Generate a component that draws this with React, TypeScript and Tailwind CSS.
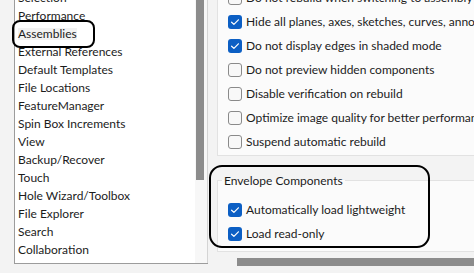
import React from "react";

const listItems = [
  "Selection",
  "Performance",
  "Assemblies",
  "External References",
  "Default Templates",
  "File Locations",
  "FeatureManager",
  "Spin Box Increments",
  "View",
  "Backup/Recover",
  "Touch",
  "Hole Wizard/Toolbox",
  "File Explorer",
  "Search",
  "Collaboration",
  "Messages/Errors/Warnings",
];

const topOptions: { label: string; checked: boolean }[] = [
  { label: "Do not rebuild when switching to assembly window", checked: false },
  { label: "Hide all planes, axes, sketches, curves, annotations, etc.", checked: true },
  { label: "Do not display edges in shaded mode", checked: true },
  { label: "Do not preview hidden components", checked: false },
  { label: "Disable verification on rebuild", checked: false },
  { label: "Optimize image quality for better performance", checked: false },
  { label: "Suspend automatic rebuild", checked: false },
];

function Box({ checked }: { checked: boolean }) {
  if (checked) {
    return (
      <svg width="14" height="14" viewBox="0 0 14 14" className="shrink-0">
        <rect x="0" y="0" width="14" height="14" rx="3" fill="#0c5fc4" />
        <path d="M3.6 7.2 L5.9 9.4 L10.4 4.8" fill="none" stroke="#ffffff" strokeWidth="1.2" strokeLinecap="round" strokeLinejoin="round" />
      </svg>
    );
  }
  return (
    <svg width="14" height="14" viewBox="0 0 14 14" className="shrink-0">
      <rect x="0.5" y="0.5" width="13" height="13" rx="2.5" fill="#f8f8f8" stroke="#8a8a8a" strokeWidth="1" />
    </svg>
  );
}

function Row({ label, checked }: { label: string; checked: boolean }) {
  return (
    <div className="h-[24px] flex items-center gap-[4px] whitespace-nowrap">
      <Box checked={checked} />
      <span>{label}</span>
    </div>
  );
}

export default function App() {
  return (
    <div
      className="w-[474px] h-[273px] overflow-hidden relative bg-[#f3f3f3] flex text-[12px] text-[#1c1c1c] leading-none"
      style={{ fontFamily: 'Lato, "Noto Sans", sans-serif' }}
    >
      <div className="w-[14px] shrink-0" />
      {/* list panel */}
      <div className="w-[194px] h-[264px] shrink-0 flex border-l border-b border-[#9c9c9c] bg-white overflow-hidden">
        <div className="flex-1 -mt-[11px] flex flex-col">
          {listItems.map((t) => (
            <div key={t} className="h-[18px] shrink-0 flex items-center pl-[3px] whitespace-nowrap">
              <span className={t === "Assemblies" ? "bg-[#f2f2f2]" : ""}>{t}</span>
            </div>
          ))}
        </div>
        <div className="w-[13px] shrink-0 flex border-r border-[#d4d4d4] bg-[#f7f7f7]">
          <div className="w-[8px] h-[180px] ml-[1px] bg-[#8c8c8c]" />
        </div>
      </div>
      {/* right panel */}
      <div className="flex-1 flex flex-col pl-[9px] min-w-0">
        <div className="-mt-[14px] h-[170px] shrink-0 flex flex-col border-l border-b border-[#e2e2e2] bg-[#fbfbfb] pl-[10px]">
          {topOptions.map((o) => (
            <Row key={o.label} label={o.label} checked={o.checked} />
          ))}
        </div>
        <fieldset className="mt-[16px] border border-r-0 border-[#e2e2e2] bg-[#fbfbfb] pl-[10px] pb-[5px] min-w-0">
          <legend className="ml-[-6px] px-[2px] h-[17px] flex items-center whitespace-nowrap">Envelope Components</legend>
          <div className="pt-[9px]">
            <Row label="Automatically load lightweight" checked={true} />
            <Row label="Load read-only" checked={true} />
          </div>
        </fieldset>
        <div className="mt-[6px] h-[8px] ml-[20px] bg-[#8c8c8c] shrink-0" />
      </div>
      {/* annotations */}
      <div className="absolute left-[12px] top-[20px] w-[83px] h-[28px] border-2 border-black rounded-[8px]" />
      <div className="absolute left-[209px] top-[165px] w-[221px] h-[83px] border-2 border-black rounded-[13px]" />
    </div>
  );
}
